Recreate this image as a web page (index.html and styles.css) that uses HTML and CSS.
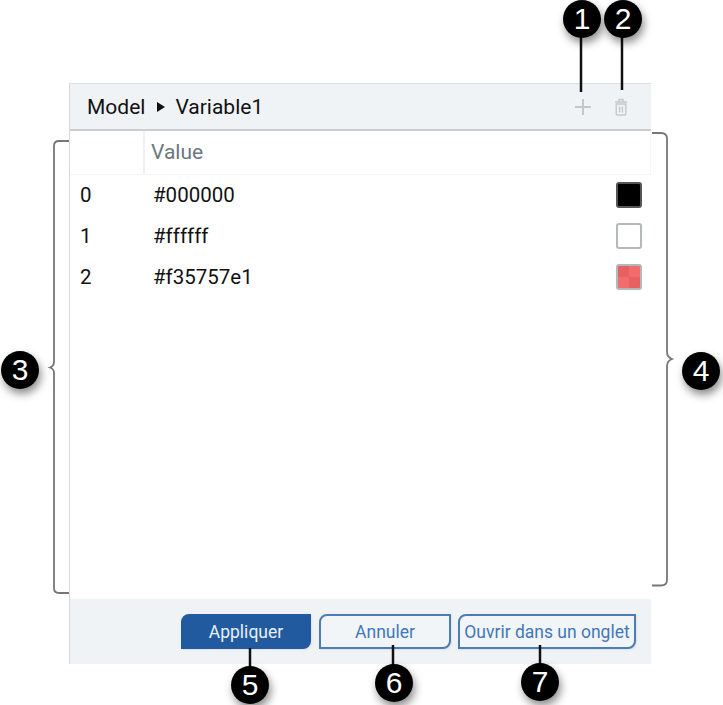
FILE: index.html
```html
<!DOCTYPE html>
<html lang="en">
<head>
    <meta charset="UTF-8">
    <meta name="viewport" content="width=device-width, initial-scale=1.0">
    <title>Variable1</title>
    <link rel="stylesheet" href="styles.css">
</head>
<body>
<div class="page">

    <div class="panel">
        <header class="panel-head">
            <span>Model</span>
            <svg class="crumb-arrow" width="8" height="10" viewBox="0 0 8 10"><path d="M0 0L8 5L0 10Z" fill="#111"/></svg>
            <span>Variable1</span>
            <svg class="icon-add" width="18" height="18" viewBox="0 0 18 18"><path d="M9 1V17M1 9H17" stroke="#c3c8cc" stroke-width="2" fill="none"/></svg>
            <svg class="icon-trash" width="14" height="18" viewBox="0 0 14 18" fill="none" stroke="#c3c8cc" stroke-width="1.4"><path d="M1 4H13M5 4V1.5H9V4"/><path d="M2.2 6H11.8V16C11.8 16.6 11.4 17 10.8 17H3.2C2.6 17 2.2 16.6 2.2 16Z"/><path d="M5.6 8.5V14.5M8.4 8.5V14.5"/></svg>
        </header>

        <div class="table-head">
            <div class="col-index"></div>
            <div class="col-value">Value</div>
        </div>

        <ul class="rows">
            <li class="row"><span class="row-index">0</span><span class="row-value">#000000</span><span class="swatch swatch-black"></span></li>
            <li class="row"><span class="row-index">1</span><span class="row-value">#ffffff</span><span class="swatch swatch-white"></span></li>
            <li class="row"><span class="row-index">2</span><span class="row-value">#f35757e1</span><span class="swatch swatch-alpha"></span></li>
        </ul>

        <footer class="panel-foot">
            <button class="btn btn-primary">Appliquer</button>
            <button class="btn btn-cancel">Annuler</button>
            <button class="btn btn-tab">Ouvrir dans un onglet</button>
        </footer>
    </div>

    <!-- Callouts drawn over the screenshot -->
    <svg class="overlay" width="723" height="705" viewBox="0 0 723 705" fill="none">
        <g stroke="#111" stroke-width="2.5">
            <path d="M581 30V92"/>
            <path d="M622 30V90"/>
            <path d="M250 648V670"/>
            <path d="M393 645V670"/>
            <path d="M540 645V670"/>
        </g>
        <g stroke="#777" stroke-width="1.8">
            <path d="M69 141H59Q54 141 54 146V362Q54 366 50 367.5Q54 369 54 373V588Q54 593 59 593H69"/>
            <path d="M652 133H661Q667 133 667 139V352Q667 357 672 359Q667 361 667 366V580Q667 585.5 661 585.5H652"/>
        </g>
    </svg>

    <div class="callout callout-1">1</div>
    <div class="callout callout-2">2</div>
    <div class="callout callout-3">3</div>
    <div class="callout callout-4">4</div>
    <div class="callout callout-5">5</div>
    <div class="callout callout-6">6</div>
    <div class="callout callout-7">7</div>

</div>
</body>
</html>
```

FILE: styles.css
```css
* {
    box-sizing: border-box;
}
body {
    margin: 0;
    background: white;
    font-family: Roboto, "Liberation Sans", sans-serif;
    color: #111;
}
.page {
    position: relative;
    width: 723px;
    height: 705px;
    padding: 83px 0 0 69px;
    overflow: hidden;
}
.panel {
    width: 582px;
    height: 581px;
    display: flex;
    flex-direction: column;
    border-left: 1px solid #d6d8da;
}
.panel-head {
    height: 48px;
    display: flex;
    align-items: center;
    padding: 0 23px 0 17px;
    background: #f0f3f6;
    border-top: 1px solid #dcdfe1;
    border-bottom: 2px solid #c9cdd0;
    font-size: 21px;
}
.crumb-arrow {
    margin: 0 10px 0 12px;
}
.icon-add {
    margin-left: auto;
}
.icon-trash {
    margin-left: 22px;
}
.table-head {
    height: 44px;
    display: flex;
    border-bottom: 1px solid #f3f4f6;
    border-right: 1px solid #f5f6f8;
    font-size: 21px;
    color: #6c7680;
}
.col-index {
    width: 75px;
    border-right: 2px solid #eef2f6;
}
.col-value {
    padding: 9px 0 0 6px;
}
.rows {
    flex: 1;
    list-style-type: none;
    margin: -1px 0 0;
    padding: 0;
    font-size: 20.5px;
}
.row {
    height: 41px;
    display: flex;
    align-items: center;
    padding: 0 9px 0 10px;
}
.row-index {
    width: 73px;
}
.swatch {
    width: 26px;
    height: 26px;
    margin-left: auto;
    border-radius: 3px;
    border: 2px solid #b4b8bb;
}
.swatch-black {
    background: #000;
    border-color: #555;
}
.swatch-white {
    background: #fff;
}
.swatch-alpha {
    background: conic-gradient(#f26c6e 0 25%, #e76063 0 50%, #f26c6e 0 75%, #e76063 0);
}
.panel-foot {
    height: 65px;
    display: flex;
    justify-content: flex-end;
    gap: 8px;
    padding: 15px 15px 0 0;
    background: #f0f3f6;
}
.btn {
    height: 35px;
    padding: 0;
    font-family: inherit;
    font-size: 17.5px;
    background: #f2f5f8;
    color: #3f78b8;
    border: 2px solid #4a7cb5;
    border-radius: 8px 0 8px 0;
    box-shadow: 1px 1px 2px #dfe2e5;
}
.btn-primary {
    width: 130px;
    background: #225a9f;
    border-color: #225a9f;
    color: #e8f0fa;
}
.btn-cancel {
    width: 132px;
    margin-right: -1px;
}
.btn-tab {
    width: 178px;
}
.overlay {
    position: absolute;
    left: 0;
    top: 0;
}
.callout {
    position: absolute;
    width: 38px;
    height: 38px;
    display: flex;
    align-items: center;
    justify-content: center;
    border-radius: 50%;
    background: #000;
    color: white;
    font-family: "Liberation Sans", sans-serif;
    font-size: 30px;
    box-shadow: 2px 5px 8px rgba(0, 0, 0, 0.45);
}
.callout-1 { left: 563px; top: 0; }
.callout-2 { left: 604px; top: 0; }
.callout-3 { left: 1px; top: 351px; }
.callout-4 { left: 682px; top: 352px; }
.callout-5 { left: 231px; top: 666px; }
.callout-6 { left: 375px; top: 664px; }
.callout-7 { left: 521px; top: 663px; }
```
